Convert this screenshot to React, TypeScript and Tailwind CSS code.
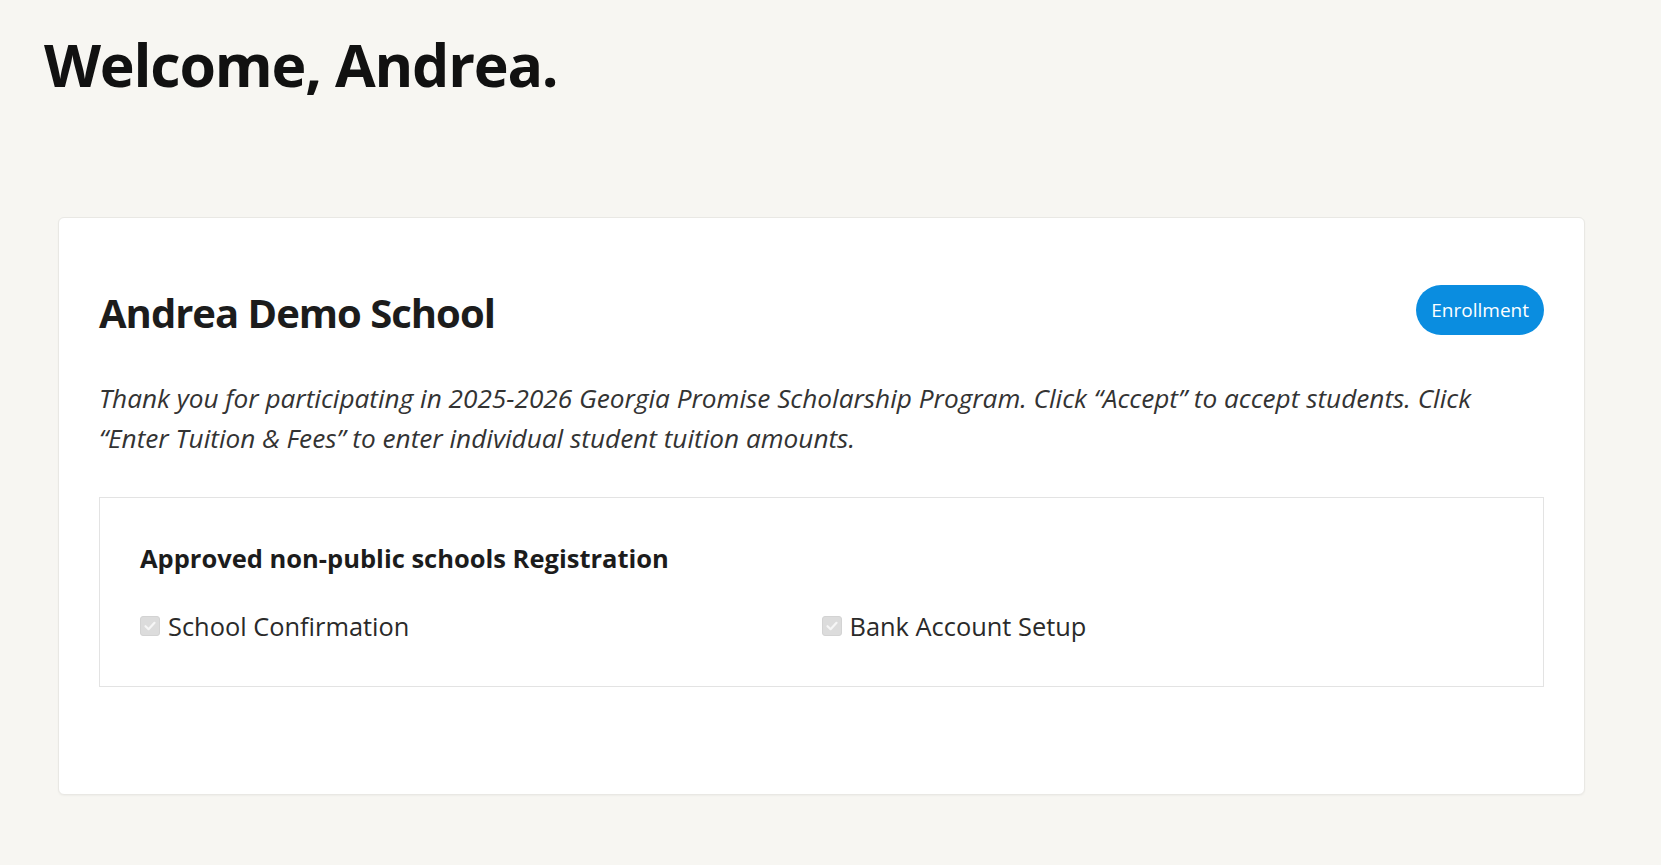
import React from "react";

function Check({ label }: { label: string }) {
  return (
    <label className="flex items-center gap-2 h-[40px]">
      <span className="w-[20px] h-[20px] rounded-[3px] bg-[#dcdcdc] border border-[#d3d3d3] flex items-center justify-center">
        <svg width="14" height="14" viewBox="0 0 14 14">
          <path d="M2.5 7.2 L5.6 10.2 L11.5 3.8" fill="none" stroke="#f6f6f6" strokeWidth="2.2" strokeLinecap="round" strokeLinejoin="round" />
        </svg>
      </span>
      <span className="text-[25.4px] leading-[40px] text-[#2a2a2a]">{label}</span>
    </label>
  );
}

export default function App() {
  return (
    <div className="min-h-[865px] bg-[#f7f6f2] text-[#111] font-['Open_Sans','Noto_Sans',sans-serif]">
      <div className="pt-[35px] pl-[44px]">
        <h1 className="text-[59px] leading-none font-bold tracking-[-1.2px] text-[#111]">Welcome, Andrea.</h1>
      </div>
      <div className="ml-[58px] mt-[123px] w-[1527px] bg-white border border-[#e9e8e4] rounded-[6px] shadow-[0_1px_2px_rgba(0,0,0,0.04)] px-10 pt-[67px] pb-[107px]">
        <div className="flex items-center justify-between h-[50px]">
          <h2 className="pt-[6px] text-[40px] leading-none font-bold tracking-[-1px] text-[#1c1c1c]">Andrea Demo School</h2>
          <button className="h-[50px] px-[15px] rounded-full bg-[#0a8de0] text-white text-[19px]">Enrollment</button>
        </div>
        <p className="mt-[43px] text-[26.2px] leading-[40px] italic text-[#333]">
          Thank you for participating in 2025-2026 Georgia Promise Scholarship Program. Click “Accept” to accept students. Click
          <br />
          “Enter Tuition &amp; Fees” to enter individual student tuition amounts.
        </p>
        <div className="mt-[39px] border border-[#e3e3e3] px-10 pt-10 pb-10">
          <h3 className="text-[25.5px] leading-[40px] font-bold text-[#1c1c1c]">Approved non-public schools Registration</h3>
          <div className="mt-[28px] grid grid-cols-2">
            <Check label="School Confirmation" />
            <Check label="Bank Account Setup" />
          </div>
        </div>
      </div>
    </div>
  );
}
